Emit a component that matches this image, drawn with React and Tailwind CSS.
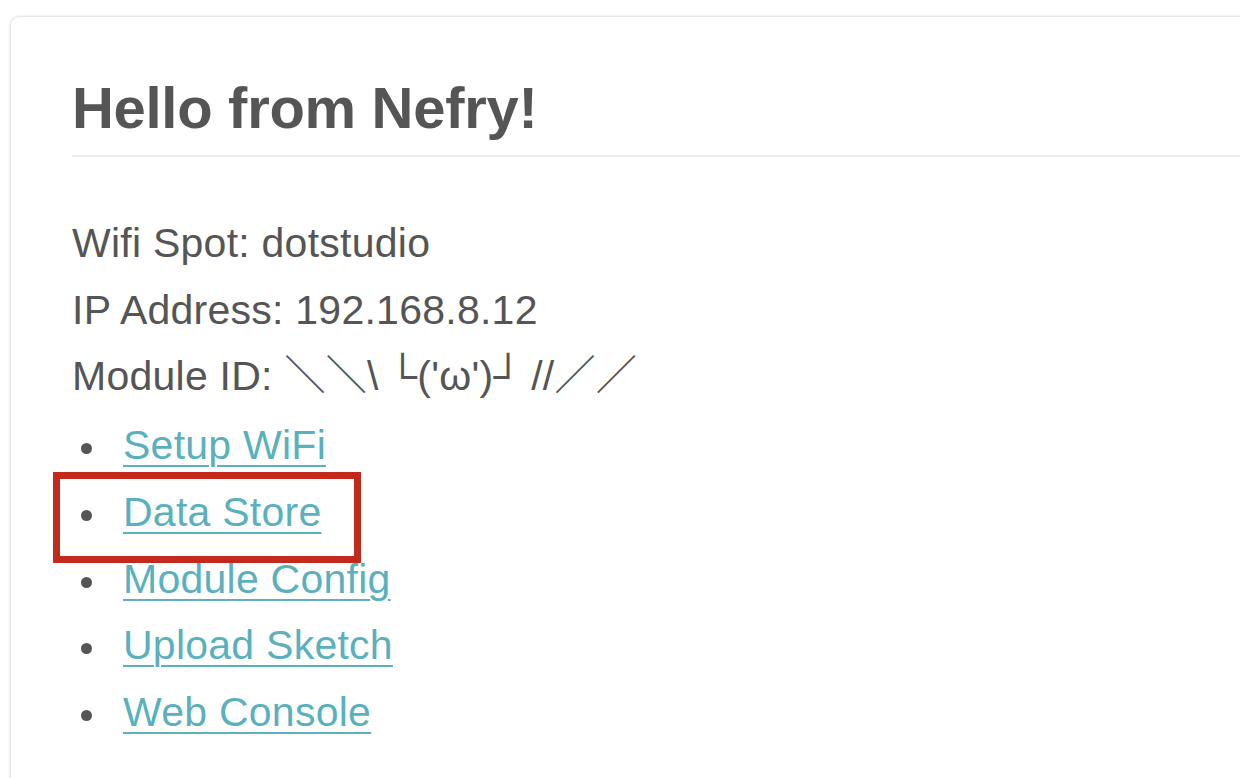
import React from "react";

const links = ["Setup WiFi", "Data Store", "Module Config", "Upload Sketch", "Web Console"];

export default function App() {
  return (
    <div
      className="relative h-[778px] w-[1240px] overflow-hidden bg-white text-[#555555]"
      style={{ fontFamily: '"Liberation Sans", Arial, "Noto Sans CJK JP", sans-serif' }}
    >
      <div className="ml-[10px] mt-[16px] w-[1400px] h-[900px] rounded-[9px] border border-[#e6e6e6] shadow-[0_0_3px_rgba(0,0,0,0.10)] pl-[61px] pt-[59px]">
        <h1 className="text-[58px] leading-[64px] font-bold tracking-[-0.3px]">Hello from Nefry!</h1>
        <div className="mt-[15px] h-[2px] bg-[#eeeeee]" />
        <div className="mt-[53px] text-[41px] leading-[66.7px] tracking-[0.25px]">
          <p>Wifi Spot: dotstudio</p>
          <p>IP Address: 192.168.8.12</p>
          <p>
            Module ID: ＼＼\<span className="tracking-[-2px]"> </span>└('ω')┘<span className="tracking-[-3px]"> </span>//／／
          </p>
          <ul className="mt-[2px]">
            {links.map((l) => (
              <li key={l} className="flex items-start">
                <span className="mt-[31px] ml-[9px] mr-[31px] h-[11px] w-[11px] shrink-0 rounded-full bg-[#555555]" />
                <a
                  href="#"
                  className="text-[#5ab1bd] underline decoration-2 underline-offset-[6px]"
                >
                  {l}
                </a>
              </li>
            ))}
          </ul>
        </div>
      </div>
      <div className="absolute left-[53px] top-[472px] h-[91px] w-[308px] border-[7px] border-[#c42a1b]" />
    </div>
  );
}
